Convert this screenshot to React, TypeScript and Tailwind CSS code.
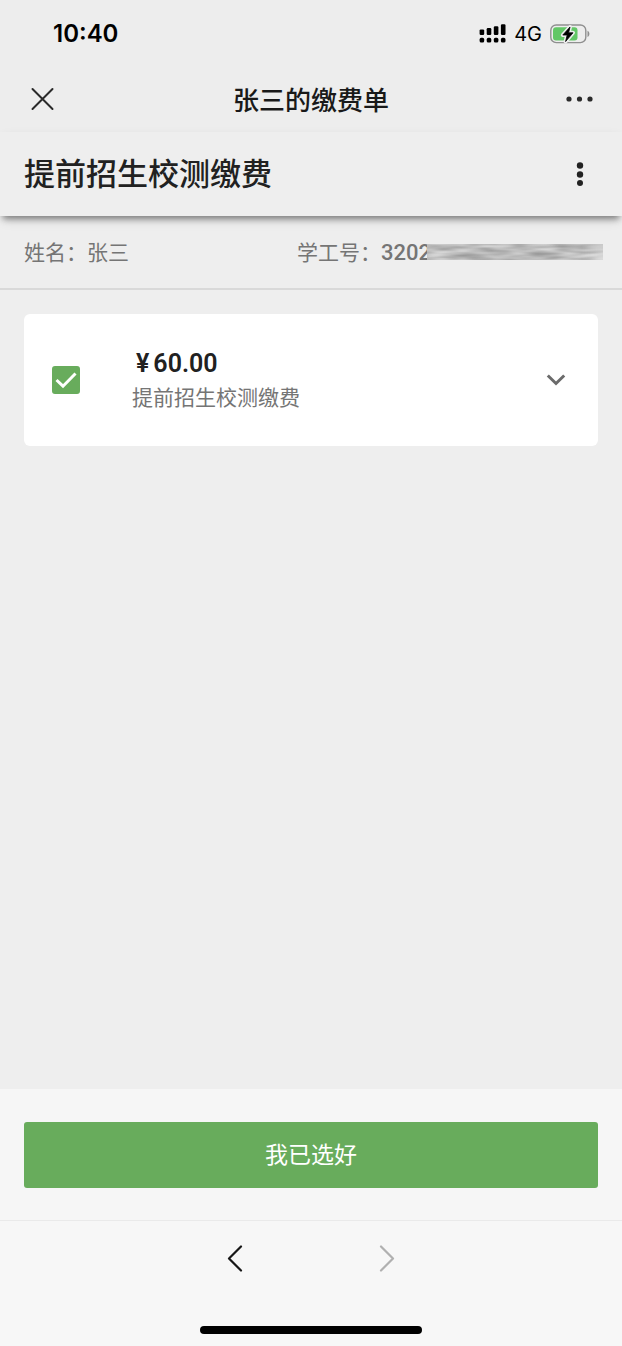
import { useState } from "react";

function SignalIcon() {
  return (
    <svg width="27" height="20" viewBox="0 0 27 20" fill="#000" aria-hidden="true">
      <rect x="0.6" y="5.4" width="4.6" height="5.6" rx="1.2" />
      <rect x="7.7" y="4" width="4.6" height="7" rx="1.2" />
      <rect x="14.8" y="2.2" width="4.6" height="8.8" rx="1.2" />
      <rect x="21.9" y="0.2" width="4.6" height="10.8" rx="1.2" />
      <rect x="0.6" y="13.8" width="4.6" height="4.8" rx="1.6" />
      <rect x="7.7" y="13.8" width="4.6" height="4.8" rx="1.6" />
      <rect x="14.8" y="13.8" width="4.6" height="4.8" rx="1.6" />
      <rect x="21.9" y="13.8" width="4.6" height="4.8" rx="1.6" />
    </svg>
  );
}

function BatteryIcon() {
  const bolt = "M20 3 L12.8 11 H17.2 L15.6 17.5 L23 8.8 H18.6 Z";
  return (
    <svg width="40" height="20" viewBox="0 0 40 20" aria-hidden="true">
      <rect x="0.8" y="1" width="35" height="17.6" rx="5.4" fill="none" stroke="#8f8f8f" strokeWidth="1.4" />
      <rect x="3" y="3.2" width="24.5" height="13.2" rx="3" fill="#62c766" />
      <path d="M37.5 6.8 C40 7.8 40 12 37.5 13 Z" fill="#8f8f8f" />
      <path d={bolt} fill="#ededed" stroke="#ededed" strokeWidth="4" strokeLinejoin="round" />
      <path d={bolt} fill="#000" stroke="#000" strokeWidth="0.8" strokeLinejoin="round" />
    </svg>
  );
}

function StatusBar() {
  return (
    <div className="flex h-[68px] items-center justify-between pr-8 pl-[53px] text-black">
      <time className="font-['Inter','Liberation_Sans',sans-serif] text-2xl font-semibold">10:40</time>
      <div className="flex items-center gap-2">
        <SignalIcon />
        <span className="font-['Inter','Liberation_Sans',sans-serif] text-xl">4G</span>
        <BatteryIcon />
      </div>
    </div>
  );
}

function TitleBar() {
  return (
    <div className="grid h-16 grid-cols-[1fr_auto_1fr] items-center px-7 pb-1">
      <button type="button" aria-label="关闭" className="justify-self-start">
        <svg width="28" height="28" viewBox="0 0 28 28" fill="none" stroke="#2a2a2a" strokeWidth="2" strokeLinecap="round">
          <path d="M4.5 5 L24.5 25 M24.5 5 L4.5 25" />
        </svg>
      </button>
      <div className="text-[26px] font-medium text-[#191919]">张三的缴费单</div>
      <button type="button" aria-label="更多" className="justify-self-end">
        <svg width="28" height="28" viewBox="0 0 28 28" fill="#2a2a2a">
          <circle cx="3" cy="15" r="2.6" />
          <circle cx="13.5" cy="15" r="2.6" />
          <circle cx="24" cy="15" r="2.6" />
        </svg>
      </button>
    </div>
  );
}

function PageHeader() {
  return (
    <header className="relative flex h-[84px] items-center justify-between bg-[#eeeeee] pr-7 pb-1 pl-6 shadow-[0_6px_6px_-3px_rgba(0,0,0,0.38),0_5px_12px_-3px_rgba(0,0,0,0.2)]">
      <h1 className="text-[31px] font-medium text-[#212121]">提前招生校测缴费</h1>
      <button type="button" aria-label="菜单">
        <svg width="28" height="28" viewBox="0 0 28 28" fill="#212121">
          <circle cx="14" cy="7.5" r="3.2" />
          <circle cx="14" cy="16.5" r="3.2" />
          <circle cx="14" cy="25" r="3" />
        </svg>
      </button>
    </header>
  );
}

function RedactedDigits() {
  return (
    <svg width="176" height="17" viewBox="0 0 176 17" className="-ml-1 shrink-0" role="img" aria-label="已隐藏">
      <defs>
        <filter id="smudge" x="0" y="0" width="100%" height="100%" colorInterpolationFilters="sRGB">
          <feTurbulence type="fractalNoise" baseFrequency="0.03 0.2" numOctaves="2" seed="7" />
          <feColorMatrix values="0.45 0 0 0 0.5  0.45 0 0 0 0.5  0.45 0 0 0 0.5  0 0 0 0 1" />
        </filter>
        <linearGradient id="fade">
          <stop offset="0" stopColor="#fff" />
          <stop offset="0.88" stopColor="#fff" />
          <stop offset="1" stopColor="#888" />
        </linearGradient>
        <mask id="edge">
          <rect width="176" height="16" fill="url(#fade)" />
        </mask>
      </defs>
      <g mask="url(#edge)">
        <rect width="176" height="16" filter="url(#smudge)" />
      </g>
    </svg>
  );
}

function StudentInfo() {
  return (
    <section className="flex h-[74px] items-center border-b-2 border-[#d9d9d9] pr-4 pl-6 text-[21px] text-[#757575]">
      <div className="flex-[273]">姓名：张三</div>
      <div className="flex flex-[309] items-center whitespace-nowrap">
        <span>学工号：</span>
        <span className="font-['Roboto','Liberation_Sans',sans-serif] text-[22px] font-medium">3202</span>
        <RedactedDigits />
      </div>
    </section>
  );
}

function FeeCard() {
  const [checked, setChecked] = useState(true);
  return (
    <article className="flex h-[132px] items-center rounded-md bg-white px-7">
      <label className="relative flex size-7 shrink-0">
        <input
          type="checkbox"
          aria-label="提前招生校测缴费"
          checked={checked}
          onChange={(event) => setChecked(event.target.checked)}
          className="size-7 appearance-none rounded-[3px] border-2 border-[#757575] checked:border-[#68ac5c] checked:bg-[#68ac5c]"
        />
        {checked && (
          <svg className="pointer-events-none absolute inset-0" width="28" height="28" viewBox="0 0 28 28" fill="none" stroke="#fff" strokeWidth="3">
            <path d="M4.5 14 L11 20.2 L23.5 7.5" />
          </svg>
        )}
      </label>
      <div className="ml-[52px] flex-1">
        <div className="ml-1 flex items-center gap-1 font-['Roboto','Noto_Sans_CJK_SC',sans-serif] text-[25px] leading-8 font-semibold text-[#212121]">
          <span>¥</span>
          <span>60.00</span>
        </div>
        <div className="text-[21px] leading-8 text-[#757575]">提前招生校测缴费</div>
      </div>
      <button type="button" aria-label="展开">
        <svg width="28" height="28" viewBox="0 0 28 28" fill="none" stroke="#6b6b6b" strokeWidth="3">
          <path d="M5.8 9.5 L14 17.5 L22.2 9.5" />
        </svg>
      </button>
    </article>
  );
}

function BrowserNav() {
  return (
    <nav className="flex h-[126px] flex-col items-center border-t border-[#eaeaea] bg-[#f7f7f7]">
      <div className="flex items-center gap-[124px] pt-[23px]">
        <button type="button" aria-label="后退">
          <svg width="28" height="28" viewBox="0 0 28 28" fill="none" stroke="#171717" strokeWidth="2.2" strokeLinecap="round" strokeLinejoin="round">
            <path d="M20 2.5 L8 14.5 L20 26.5" />
          </svg>
        </button>
        <button type="button" aria-label="前进">
          <svg width="28" height="28" viewBox="0 0 28 28" fill="none" stroke="#b0b0b0" strokeWidth="2.2" strokeLinecap="round" strokeLinejoin="round">
            <path d="M8 2.5 L20 14.5 L8 26.5" />
          </svg>
        </button>
      </div>
      <div className="mt-auto mb-3 h-2 w-[222px] rounded-full bg-black" />
    </nav>
  );
}

export default function App() {
  return (
    <div className="flex min-h-screen flex-col bg-[#eeeeee] font-['Noto_Sans_CJK_SC',sans-serif]">
      <div className="bg-[#ededed]">
        <StatusBar />
        <TitleBar />
      </div>
      <PageHeader />
      <StudentInfo />
      <main className="flex-1 px-6 pt-6">
        <FeeCard />
      </main>
      <footer className="bg-[#f6f6f6] px-6 pt-[33px] pb-8">
        <button type="button" className="h-[66px] w-full rounded-[3px] bg-[#68ac5c] pb-1 text-[23px] text-white">
          我已选好
        </button>
      </footer>
      <BrowserNav />
    </div>
  );
}
